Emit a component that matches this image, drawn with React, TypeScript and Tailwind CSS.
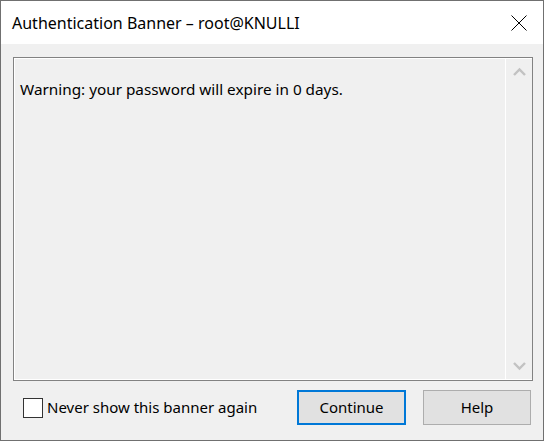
import React from "react";

export default function App() {
  const font = { fontFamily: '"Noto Sans", "Open Sans", sans-serif' };
  return (
    <div
      className="w-[544px] h-[441px] border border-[#707070] bg-[#f0f0f0] flex flex-col text-black box-border"
      style={font}
    >
      {/* Title bar */}
      <div className="h-[43px] bg-white flex items-center justify-between pl-[11px] pr-[16px] shrink-0">
        <span className="text-[16px] leading-none">Authentication Banner – root@KNULLI</span>
        <svg width="16" height="16" viewBox="0 0 16 16" className="block">
          <path d="M0.5 0.5 L15.5 15.5 M15.5 0.5 L0.5 15.5" stroke="#000" strokeWidth="1" fill="none" />
        </svg>
      </div>
      {/* Body */}
      <div className="flex-1 flex flex-col pl-[12px] pr-[10px] pt-[13px]">
        <div className="h-[324px] border border-[#828282] flex shrink-0">
          <div className="flex-1 border border-white border-r-0 pl-[5px] pt-[20px] text-[15.3px] leading-[20px]">
            Warning: your password will expire in 0 days.
          </div>
          <div className="w-[27px] border-l border-white border-y flex flex-col items-center justify-between py-[8px] bg-[#f0f0f0]">
            <svg width="13" height="9" viewBox="0 0 13 9">
              <path d="M1 8 L6.5 2.5 L12 8" stroke="#c2c2c2" strokeWidth="2.4" fill="none" />
            </svg>
            <svg width="13" height="9" viewBox="0 0 13 9">
              <path d="M1 1 L6.5 6.5 L12 1" stroke="#c2c2c2" strokeWidth="2.4" fill="none" />
            </svg>
          </div>
        </div>
        <div className="flex items-center pt-[9px]">
          <label className="flex items-center gap-[4px] ml-[10px] w-[274px]">
            <span className="w-[20px] h-[20px] border border-[#333333] bg-white block" />
            <span className="text-[15px] leading-none">Never show this banner again</span>
          </label>
          <button className="w-[109px] h-[35px] border-2 border-[#0078d7] bg-[#e1e1e1] text-[15px]">
            Continue
          </button>
          <button className="ml-[17px] w-[108px] h-[35px] border border-[#adadad] bg-[#e1e1e1] text-[15px]">
            Help
          </button>
        </div>
      </div>
    </div>
  );
}
